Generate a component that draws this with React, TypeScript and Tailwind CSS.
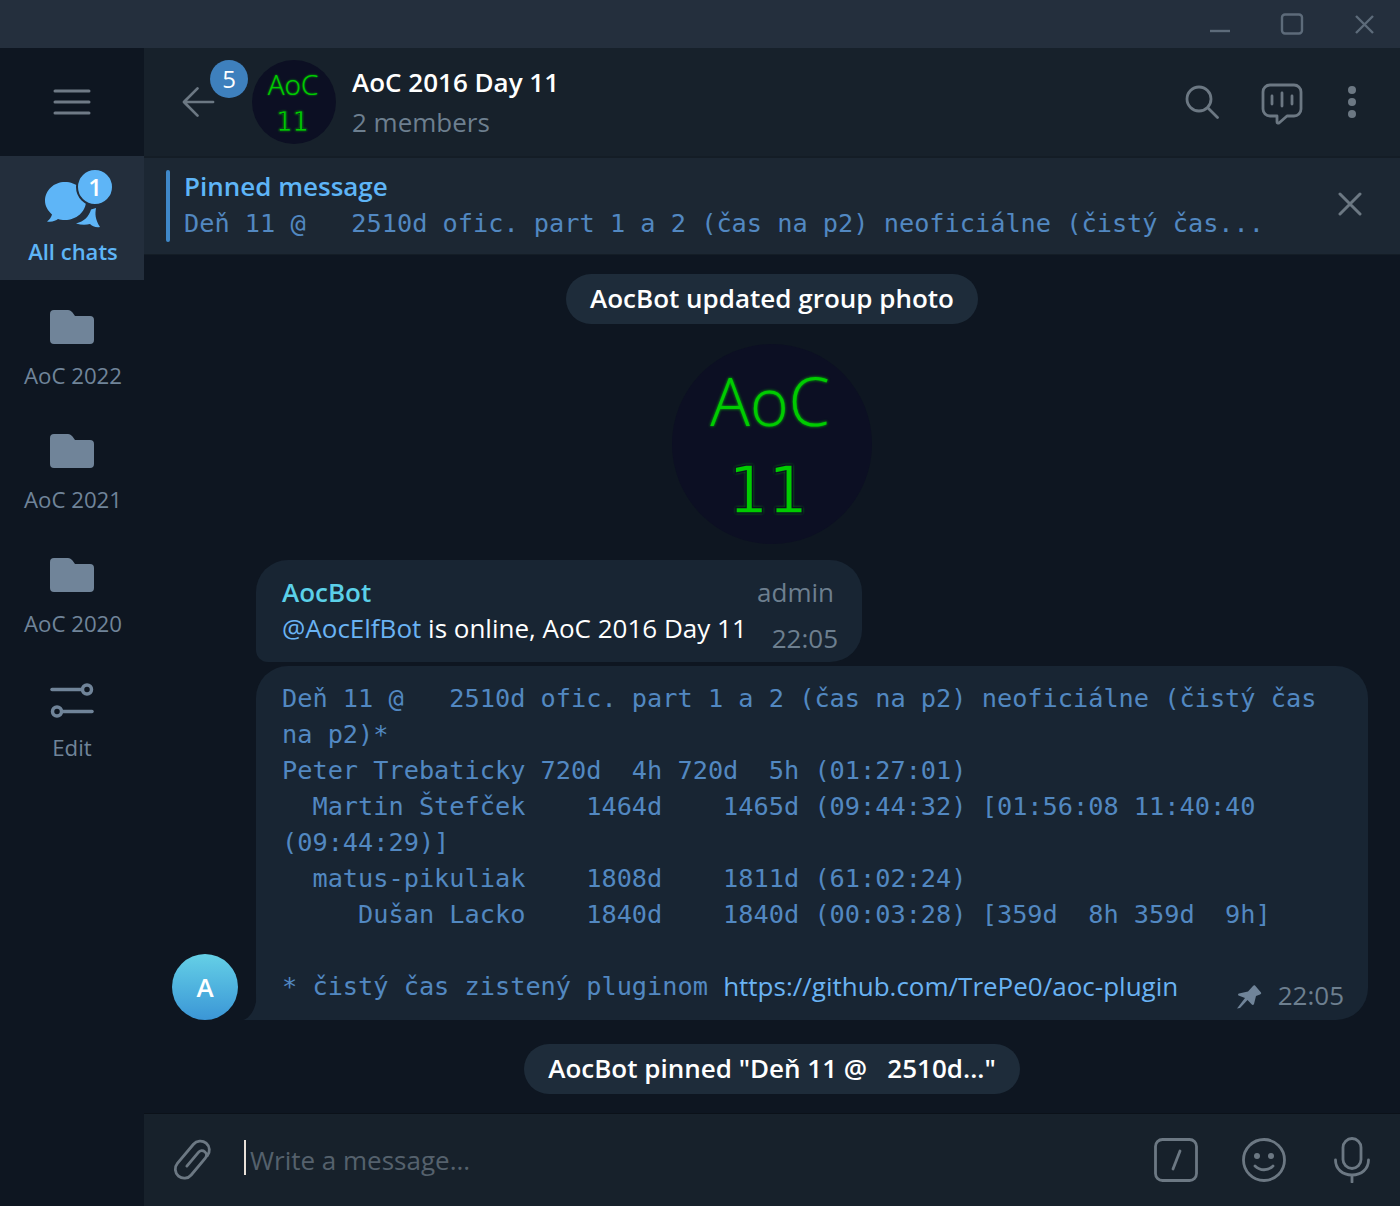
const mono = "font-['DejaVu_Sans_Mono',monospace]";

const lines = [
	"Deň 11 @   2510d ofic. part 1 a 2 (čas na p2) neoficiálne (čistý čas",
	"na p2)*",
	"Peter Trebaticky 720d  4h 720d  5h (01:27:01)",
	"  Martin Štefček    1464d    1465d (09:44:32) [01:56:08 11:40:40",
	"(09:44:29)]",
	"  matus-pikuliak    1808d    1811d (61:02:24)",
	"     Dušan Lacko    1840d    1840d (00:03:28) [359d  8h 359d  9h]",
	" ",
];

const folders = ["AoC 2022", "AoC 2021", "AoC 2020"];

const WindowControls = () => (
	<div className="h-12 bg-[#242f3d] flex justify-end shrink-0">
		<svg width="200" height="48" viewBox="0 0 200 48" fill="none" stroke="#5d6b7a" strokeWidth="2.4">
			<path d="M10 31h20" />
			<rect x="82" y="14.5" width="20" height="19" rx="3" />
			<path d="M156 16l17 17M173 16l-17 17" />
		</svg>
	</div>
);

const FolderIcon = () => (
	<svg width="44" height="34" viewBox="0 0 44 34" fill="#708499">
		<path d="M4 0h14c2 0 3 1 4.500 2.500L25 6h15a4 4 0 0 1 4 4v20a4 4 0 0 1-4 4H4a4 4 0 0 1-4-4V4a4 4 0 0 1 4-4z" />
	</svg>
);

const Sidebar = () => (
	<aside className="w-36 shrink-0 bg-[#0e1621] flex flex-col items-stretch">
		<div className="h-[108px] flex items-center justify-center">
			<svg width="38" height="28" viewBox="0 0 38 28" stroke="#6f7a86" strokeWidth="3" strokeLinecap="round">
				<path d="M2 3h34M2 14h34M2 25h34" />
			</svg>
		</div>
		<div className="relative h-[124px] bg-[#232e3c] flex flex-col items-center">
			<svg className="mt-[24px] ml-[6px]" width="60" height="52" viewBox="0 0 60 52" fill="#5eb5f7">
				<path d="M20 2c11 0 21 8 21 19 0 11-10 19-21 19-3 0-5-.3-7-1-2 1.500-6 3.500-11 2.500 2.500-2 4.500-4.500 5-7C3 31 0 26 0 21 0 10 9 2 20 2z" />
				<path d="M51 28c-1 6-1 11 4 19-4 1-8-1-10-3-4 1-9 1-14-.5 8-2 13-7 15-14z" />
			</svg>
			<span className="absolute left-[76px] top-[12px] w-[38px] h-[38px] rounded-full bg-[#5eb5f7] border-2 border-[#232e3c] text-white text-[24px] font-semibold flex items-center justify-center">
				1
			</span>
			<span className="absolute inset-x-0 top-[79px] pl-[2px] text-center text-[#5eb5f7] text-[22px] leading-8 font-semibold">
				All chats
			</span>
		</div>
		{folders.map((name) => (
			<div key={name} className="h-[124px] flex flex-col items-center pt-[30px]">
				<FolderIcon />
				<span className="mt-[16px] ml-[2px] text-[#708499] text-[22.25px] leading-8 font-medium">{name}</span>
			</div>
		))}
		<div className="h-[124px] flex flex-col items-center pt-[30px]">
			<svg width="44" height="38" viewBox="0 0 44 38" fill="none" stroke="#708499" strokeWidth="3.500" strokeLinecap="round">
				<path d="M2 7.500h30" />
				<circle cx="37" cy="7.500" r="4.500" />
				<path d="M12 29.500h30" />
				<circle cx="7" cy="29.500" r="4.500" />
			</svg>
			<span className="mt-[12px] text-[#708499] text-[22.25px] leading-8 font-medium">Edit</span>
		</div>
	</aside>
);

const AocLogo = ({ small }: { small?: boolean }) =>
	small ? (
		<div className="w-[84px] h-[84px] rounded-full bg-[#0c0f23] flex flex-col items-center text-[#00cc00] [text-shadow:0_0_2px_#00cc00] pt-[3px] pr-[2px]">
			<span className="text-[28px] leading-[42px] font-light">AoC</span>
			<span className={`text-[27px] leading-[34px] mr-[2px] [-webkit-text-stroke:0.6px_#0c0f23] ${mono}`}>11</span>
		</div>
	) : (
		<div className="w-[200px] h-[200px] rounded-full bg-[#0c0f23] flex flex-col items-center text-[#00cc00] [text-shadow:0_0_3px_#00cc00] pt-[6px] pr-[4px]">
			<span className="text-[66px] leading-[100px] font-light">AoC</span>
			<span className={`text-[66px] leading-[82px] mr-[6px] [-webkit-text-stroke:1.5px_#0c0f23] ${mono}`}>11</span>
		</div>
	);

const ChatHeader = () => (
	<header className="h-[110px] shrink-0 bg-[#17212b] border-b-2 border-[#141d26] flex items-center pl-[38px] pr-[43px]">
		<div className="relative shrink-0 w-[70px] h-[84px] flex items-center">
			<svg width="33" height="32" viewBox="0 0 34 32" fill="none" stroke="#6c7883" strokeWidth="2.800" strokeLinecap="round" strokeLinejoin="round">
				<path d="M32 16H3M16 2L2 16l14 14" />
			</svg>
			<span className="absolute left-[28px] top-0 w-[38px] h-[38px] rounded-full bg-[#3e80bd] text-white text-[24px] font-medium flex items-center justify-center">
				5
			</span>
		</div>
		<AocLogo small />
		<div className="ml-4 flex flex-col">
			<span className="text-white text-[26px] leading-10 font-semibold">AoC 2016 Day 11</span>
			<span className="text-[#6d7f8f] text-[26px] leading-10">2 members</span>
		</div>
		<div className="ml-auto flex items-center">
			<svg width="34" height="34" viewBox="0 0 34 34" fill="none" stroke="#6c7883" strokeWidth="2.800" strokeLinecap="round">
				<circle cx="14" cy="14" r="12" />
				<path d="M23 23l9.500 9.500" />
			</svg>
			<svg className="ml-[42px] mt-[4px]" width="42" height="42" viewBox="0 0 42 42" fill="none" stroke="#6c7883" strokeWidth="2.800" strokeLinecap="round" strokeLinejoin="round">
				<path d="M9 2h24a7 7 0 0 1 7 7v17a7 7 0 0 1-7 7H26l-8 7c-1 .5-2 0-2-1v-6H9a7 7 0 0 1-7-7V9a7 7 0 0 1 7-7z" />
				<path d="M11 13v8M21 10v13M31 13v8" />
			</svg>
			<svg className="ml-[44px]" width="10" height="34" viewBox="0 0 10 34" fill="#6c7883">
				<circle cx="5" cy="5" r="4" />
				<circle cx="5" cy="17" r="4" />
				<circle cx="5" cy="29" r="4" />
			</svg>
		</div>
	</header>
);

const PinnedBar = () => (
	<div className="h-[97px] shrink-0 bg-[#1c2733] border-b border-[#141d26] flex items-center pl-[22px] pr-[38px]">
		<div className="w-1 h-[72px] rounded bg-[#3f88c9] shrink-0" />
		<div className="ml-[14px] flex flex-col min-w-0 flex-1">
			<span className="text-[#5eb5f7] text-[26px] leading-9 font-semibold mt-[-2px]">Pinned message</span>
			<span className={`text-[#5288c1] text-[25.28px] leading-9 mt-[2px] whitespace-pre ${mono}`}>
				Deň 11 @   2510d ofic. part 1 a 2 (čas na p2) neoficiálne (čistý čas...
			</span>
		</div>
		<svg width="24" height="24" viewBox="0 0 24 24" stroke="#6c7883" strokeWidth="3" strokeLinecap="round" className="shrink-0 mt-[-4px]">
			<path d="M2 2l20 20M22 2L2 22" />
		</svg>
	</div>
);

const ServicePill = ({ text, className }: { text: string; className?: string }) => (
	<div className={`h-[50px] px-6 pb-[2px] rounded-[25px] bg-[#1e2c3a] text-white text-[26px] font-semibold flex items-center whitespace-pre ${className ?? ""}`}>
		{text}
	</div>
);

const Messages = () => (
	<main className="flex-1 min-h-0 bg-[#0e1621] flex flex-col items-center pt-[19px]">
		<ServicePill text="AocBot updated group photo" />
		<div className="mt-5">
			<AocLogo />
		</div>
		<div className="self-start ml-[112px] mt-4 w-[606px] h-[102px] rounded-t-[32px] rounded-br-[32px] rounded-bl-[12px] bg-[#182533] px-[26px] pt-[14px] flex flex-col">
			<div className="flex justify-between pr-[2px]">
				<span className="text-[#5bd0e8] text-[26px] leading-9 font-semibold">AocBot</span>
				<span className="text-[#6d7f8f] text-[26px] leading-9">admin</span>
			</div>
			<div className="flex justify-between mr-[-2px]">
				<span className="text-white text-[26px] leading-9">
					<span className="text-[#6ab3f3]">@AocElfBot</span> is online, AoC 2016 Day 11
				</span>
				<span className="text-[#6d7f8f] text-[26px] leading-9 mt-[10px]">22:05</span>
			</div>
		</div>
		<div className="self-start ml-7 mt-1 flex items-end">
			<div className="w-[66px] h-[66px] rounded-full bg-gradient-to-b from-[#65d0e6] to-[#3b96d6] text-white text-[26px] font-semibold flex items-center justify-center shrink-0">
				A
			</div>
			<div className="relative ml-[18px] w-[1112px] h-[354px] rounded-t-[32px] rounded-br-[32px] bg-[#182533] pl-[26px] pt-[15px]">
				<svg className="absolute left-[-13px] bottom-0" width="14" height="26" viewBox="0 0 14 26" fill="#182533">
					<path d="M14 0v26H0c7-2 13-10 14-26z" />
				</svg>
				{lines.map((line, i) => (
					<div key={i} className={`text-[#5288c1] text-[25.28px] leading-9 h-9 whitespace-pre ${mono}`}>
						{line}
					</div>
				))}
				<div className="h-9 flex items-center whitespace-pre text-[25.28px] leading-9">
					<span className={`text-[#5288c1] ${mono}`}>* čistý čas zistený pluginom </span>
					<span className="text-[#6ab3f3] text-[26px] mt-[-2px]">https://github.com/TrePe0/aoc-plugin</span>
				</div>
				<div className="absolute right-6 bottom-[7px] flex items-center gap-[16px] text-[#6d7f8f] text-[26px] leading-9">
					<svg className="mt-[4px]" width="25" height="24" viewBox="0 0 25 24" fill="#708499">
						<path d="M18 .5l6 7c.5 1 0 1.500-1 2l-4 1.500-2 8c-.3 1-1.500 1.300-2.200.6L10.500 15 3 23l-3 .5L8 13 1.500 10.500c-.7-.7-.5-2 .5-2l9-2L16 1c.6-.8 1.400-1 2-.5z" />
					</svg>
					<span>22:05</span>
				</div>
			</div>
		</div>
		<ServicePill text={'AocBot pinned "Deň 11 @   2510d..."'} className="mt-6" />
	</main>
);

const InputBar = () => (
	<footer className="h-[93px] shrink-0 bg-[#17212b] border-t border-[#0b1119] flex items-center pl-[28px] pr-[30px]">
		<svg width="40" height="46" viewBox="-20 -23 40 46" fill="none" stroke="#6c7883" strokeWidth="2.800" strokeLinecap="round" strokeLinejoin="round">
			<path transform="rotate(40)" d="M0 8V-10A4.500 4.500 0 0 1 9 -10V12A9 9 0 0 1 -9 12V-13A9 9 0 0 1 9 -13" />
		</svg>
		<div className="ml-[32px] mt-[-5px] w-[2px] h-[35px] bg-[#e8e0d8]" />
		<span className="ml-[4px] mt-[-1px] text-[#55616d] text-[26px] leading-9">Write a message...</span>
		<div className="ml-auto flex items-center">
			<svg width="44" height="44" viewBox="0 0 44 44" fill="none" stroke="#6c7883" strokeWidth="2.800" strokeLinecap="round">
				<rect x="1.500" y="1.500" width="41" height="41" rx="7" />
				<path d="M26 13l-7 18" />
			</svg>
			<svg className="ml-[44px]" width="44" height="44" viewBox="0 0 44 44" fill="none" stroke="#6c7883" strokeWidth="2.800" strokeLinecap="round">
				<circle cx="22" cy="22" r="20.500" />
				<path d="M13 28c5 5 13 5 18 0" />
				<circle cx="15" cy="18" r="3" fill="#6c7883" stroke="none" />
				<circle cx="29" cy="18" r="3" fill="#6c7883" stroke="none" />
			</svg>
			<svg className="ml-[48px]" width="36" height="46" viewBox="0 0 36 46" fill="none" stroke="#6c7883" strokeWidth="2.800" strokeLinecap="round">
				<rect x="9" y="1.500" width="18" height="30" rx="9" />
				<path d="M1.500 23c0 9 7 15 16.500 15s16.500-6 16.500-15M18 38v7" />
			</svg>
		</div>
	</footer>
);

export default function App() {
	return (
		<div className="w-[1400px] h-[1206px] flex flex-col overflow-hidden font-['Open_Sans',sans-serif]">
			<WindowControls />
			<div className="flex-1 min-h-0 flex">
				<Sidebar />
				<div className="flex-1 min-w-0 flex flex-col">
					<ChatHeader />
					<PinnedBar />
					<Messages />
					<InputBar />
				</div>
			</div>
		</div>
	);
}
